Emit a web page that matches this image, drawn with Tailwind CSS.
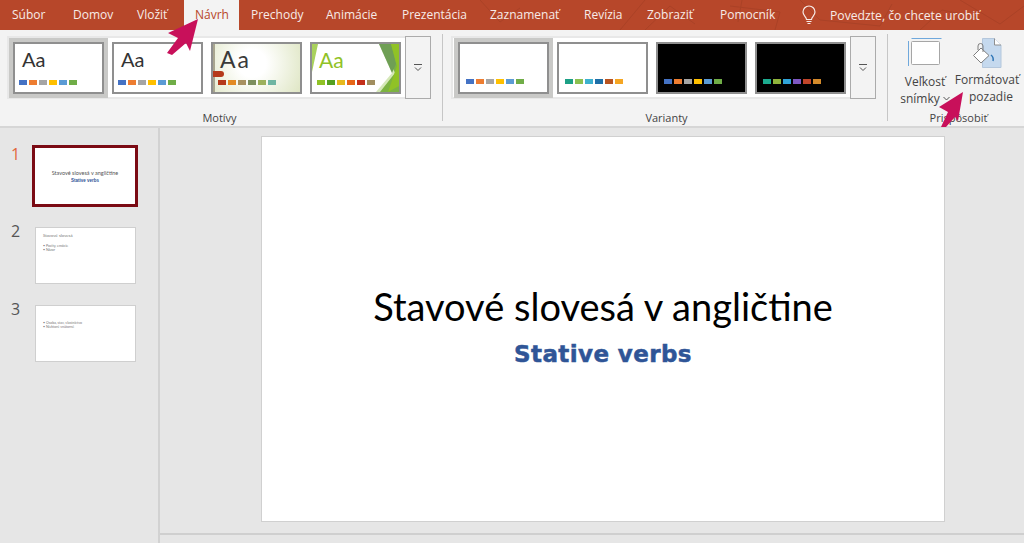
<!DOCTYPE html>
<html lang="sk">

<head>
    <meta charset="UTF-8">
    <title>Stavové slovesá v angličtine</title>
    <script src="https://cdn.jsdelivr.net/npm/@tailwindcss/browser@4"></script>
</head>

<body class="relative w-[1024px] h-[543px] overflow-hidden bg-[#e6e6e6] font-['Open_Sans',sans-serif]">

    <!-- tabs -->
    <div class="relative flex h-[30px] bg-[#b7472a] text-[12px] text-[#f7ebe7] leading-[29px]">
        <svg class="absolute left-[480px] top-0 w-[544px] h-[30px]" viewBox="0 0 544 30" fill="none" stroke="#aa4227" stroke-width="1">
            <path d="M-60 30L-20 2M-40 30L0 4M0 0L20 22L40 8" />
            <path d="M140 30L165 0M165 30L190 6L215 24" />
            <path d="M250 6L300 12L295 30M262 0L258 22" />
            <path d="M320 0L340 20L400 26L412 4" />
            <path d="M440 30L462 10L500 18M480 0L520 24L544 6" />
        </svg>
        <div class="relative w-[61px] pl-[12px]">Súbor</div>
        <div class="relative w-[64px] pl-[12px]">Domov</div>
        <div class="relative w-[59px] pl-[12px]">Vložiť</div>
        <div class="relative w-[55px] pl-[11px] bg-[#f3f3f3] text-[#b7472a]">Návrh</div>
        <div class="relative w-[75px] pl-[12px]">Prechody</div>
        <div class="relative w-[76px] pl-[12px]">Animácie</div>
        <div class="relative w-[88px] pl-[12px]">Prezentácia</div>
        <div class="relative w-[94px] pl-[12px]">Zaznamenať</div>
        <div class="relative w-[63px] pl-[12px]">Revízia</div>
        <div class="relative w-[73px] pl-[12px]">Zobraziť</div>
        <div class="relative w-[93px] pl-[12px]">Pomocník</div>
        <div class="relative flex items-center">
            <svg class="w-[16px] h-[20px] mb-[1px]" viewBox="0 0 16 20" fill="none" stroke="#f7ebe7" stroke-width="1.2">
                <path d="M5.5 14.5C5.2 11.8 2 10.5 2 7a6 6 0 0 1 12 0c0 3.500-3.200 4.800-3.500 7.500z" />
                <path d="M5.500 16.500h5M6.500 18.500h3" />
            </svg>
            <span class="ml-[13px] text-[12.2px]">Povedzte, čo chcete urobiť</span>
        </div>
    </div>

    <!-- ribbon -->
    <div class="flex h-[98px] bg-[#f3f3f3] border-b-2 border-[#d6d6d6] text-[#444444]">

        <section class="flex flex-col w-[443px] pl-[7px] mt-[4px] mb-[5px] border-r border-[#c6c6c6]">
            <div class="flex mt-[2px]">
                <div class="flex gap-[8px] w-[398px] h-[63px] pl-[4px] pt-[4px] bg-white border-y-2 border-l-2 border-[#e8e8e8]">
                    <div class="flex flex-col shrink-0 w-[91px] h-[52px] pl-[4px] bg-white border-2 border-[#8f8f8f] ring-4 ring-[#c9c9c7] text-[#333333]">
                        <div class="h-[30px] pl-[3px] text-[20px] font-['Lato',sans-serif] leading-[31px]">Aa</div>
                        <div class="flex gap-[2px] mt-[6px]">
                            <i class="w-[8px] h-[5px] bg-[#4472c4]"></i><i class="w-[8px] h-[5px] bg-[#ed7d31]"></i><i class="w-[8px] h-[5px] bg-[#a5a5a5]"></i><i class="w-[8px] h-[5px] bg-[#ffc000]"></i><i class="w-[8px] h-[5px] bg-[#5b9bd5]"></i><i class="w-[8px] h-[5px] bg-[#70ad47]"></i>
                        </div>
                    </div>
                    <div class="flex flex-col shrink-0 w-[91px] h-[52px] pl-[4px] bg-white border-2 border-[#8f8f8f] text-[#333333]">
                        <div class="h-[30px] pl-[3px] text-[20px] font-['Lato',sans-serif] leading-[31px]">Aa</div>
                        <div class="flex gap-[2px] mt-[6px]">
                            <i class="w-[8px] h-[5px] bg-[#4472c4]"></i><i class="w-[8px] h-[5px] bg-[#ed7d31]"></i><i class="w-[8px] h-[5px] bg-[#a5a5a5]"></i><i class="w-[8px] h-[5px] bg-[#ffc000]"></i><i class="w-[8px] h-[5px] bg-[#5b9bd5]"></i><i class="w-[8px] h-[5px] bg-[#70ad47]"></i>
                        </div>
                    </div>
                    <div class="relative flex flex-col shrink-0 w-[91px] h-[52px] pl-[5px] bg-[radial-gradient(circle_at_45%_40%,#ffffff_25%,#dfe6c4_100%)] border-2 border-[#8f8f8f] text-[#3a3a3a]">
                        <i class="absolute left-0 top-0 w-[2px] h-full bg-[#a8a58f]"></i>
                        <i class="absolute left-0 top-[27px] w-[11px] h-[6px] rounded-r-full bg-[#b5391a]"></i>
                        <div class="h-[30px] pl-[2px] text-[23px] tracking-[2px] font-['Lato',sans-serif] leading-[30px]">Aa</div>
                        <div class="flex gap-[2px] mt-[6px]">
                            <i class="w-[8px] h-[5px] bg-[#b5391a]"></i><i class="w-[8px] h-[5px] bg-[#e28a24]"></i><i class="w-[8px] h-[5px] bg-[#a89160]"></i><i class="w-[8px] h-[5px] bg-[#7d8f5e]"></i><i class="w-[8px] h-[5px] bg-[#9cb05c]"></i><i class="w-[8px] h-[5px] bg-[#6fb5a2]"></i>
                        </div>
                    </div>
                    <div class="relative flex flex-col shrink-0 w-[91px] h-[52px] pl-[5px] bg-white border-2 border-[#8f8f8f] text-[#90c226] overflow-hidden">
                        <svg class="absolute left-0 top-0 w-[87px] h-[48px]" viewBox="0 0 87 48">
                            <path d="M0 0H6L0 28z" fill="#a9d15c" />
                            <path d="M67 0H87V48H64L80 29z" fill="#d5e8b8" />
                            <path d="M70 0H87V48H68L83 29z" fill="#7cb342" />
                            <path d="M67 0H79L84 20L80 29z" fill="#6f9f55" />
                            <path d="M79 0H87V42L76 48L85 22z" fill="#90c226" />
                        </svg>
                        <div class="relative h-[30px] pl-[2px] text-[21px] font-['Lato',sans-serif] leading-[31px]">Aa</div>
                        <div class="relative flex gap-[2px] mt-[6px]">
                            <i class="w-[8px] h-[5px] bg-[#90c226]"></i><i class="w-[8px] h-[5px] bg-[#54a021]"></i><i class="w-[8px] h-[5px] bg-[#e6b91e]"></i><i class="w-[8px] h-[5px] bg-[#e76618]"></i><i class="w-[8px] h-[5px] bg-[#c42f1a]"></i><i class="w-[8px] h-[5px] bg-[#a18e5f]"></i>
                        </div>
                    </div>
                </div>
                <div class="flex flex-col items-center justify-center w-[26px] h-[63px] border border-[#ababab]">
                    <i class="w-[8px] h-px bg-[#555555]"></i>
                    <svg class="w-[8px] h-[5px] mt-[2px]" viewBox="0 0 8 5" fill="none" stroke="#555555"><path d="M1 .5L4 3.500L7 .5" /></svg>
                </div>
            </div>
            <div class="mt-auto -mb-[5px] pr-[10px] text-center text-[11px] leading-[16px]">Motívy</div>
        </section>

        <section class="flex flex-col w-[445px] pl-[8px] mt-[4px] mb-[5px] border-r border-[#c6c6c6]">
            <div class="flex mt-[2px]">
                <div class="flex gap-[8px] w-[399px] h-[63px] pl-[5px] pt-[4px] bg-white border-y-2 border-l-2 border-[#e8e8e8]">
                    <div class="flex shrink-0 gap-[2px] items-end w-[91px] h-[52px] pl-[6px] pb-[8px] bg-white border-2 border-[#8f8f8f] ring-4 ring-[#c9c9c7]">
                        <i class="w-[8px] h-[5px] bg-[#4472c4]"></i><i class="w-[8px] h-[5px] bg-[#ed7d31]"></i><i class="w-[8px] h-[5px] bg-[#a5a5a5]"></i><i class="w-[8px] h-[5px] bg-[#ffc000]"></i><i class="w-[8px] h-[5px] bg-[#5b9bd5]"></i><i class="w-[8px] h-[5px] bg-[#70ad47]"></i>
                    </div>
                    <div class="flex shrink-0 gap-[2px] items-end w-[91px] h-[52px] pl-[6px] pb-[8px] bg-white border-2 border-[#8f8f8f]">
                        <i class="w-[8px] h-[5px] bg-[#1ca085]"></i><i class="w-[8px] h-[5px] bg-[#8cc04f]"></i><i class="w-[8px] h-[5px] bg-[#3cb1cf]"></i><i class="w-[8px] h-[5px] bg-[#1e6fa8]"></i><i class="w-[8px] h-[5px] bg-[#b9541f]"></i><i class="w-[8px] h-[5px] bg-[#f5a623]"></i>
                    </div>
                    <div class="flex shrink-0 gap-[2px] items-end w-[91px] h-[52px] pl-[6px] pb-[8px] bg-black border-2 border-[#8f8f8f]">
                        <i class="w-[8px] h-[5px] bg-[#4472c4]"></i><i class="w-[8px] h-[5px] bg-[#ed7d31]"></i><i class="w-[8px] h-[5px] bg-[#a5a5a5]"></i><i class="w-[8px] h-[5px] bg-[#ffc000]"></i><i class="w-[8px] h-[5px] bg-[#5b9bd5]"></i><i class="w-[8px] h-[5px] bg-[#70ad47]"></i>
                    </div>
                    <div class="flex shrink-0 gap-[2px] items-end w-[91px] h-[52px] pl-[6px] pb-[8px] bg-black border-2 border-[#8f8f8f]">
                        <i class="w-[8px] h-[5px] bg-[#1cab8f]"></i><i class="w-[8px] h-[5px] bg-[#8eb33b]"></i><i class="w-[8px] h-[5px] bg-[#2fa3d8]"></i><i class="w-[8px] h-[5px] bg-[#7e57c2]"></i><i class="w-[8px] h-[5px] bg-[#c0452a]"></i><i class="w-[8px] h-[5px] bg-[#d48a2a]"></i>
                    </div>
                </div>
                <div class="flex flex-col items-center justify-center w-[26px] h-[63px] border border-[#ababab]">
                    <i class="w-[8px] h-px bg-[#555555]"></i>
                    <svg class="w-[8px] h-[5px] mt-[2px]" viewBox="0 0 8 5" fill="none" stroke="#555555"><path d="M1 .5L4 3.500L7 .5" /></svg>
                </div>
            </div>
            <div class="mt-auto -mb-[5px] pr-[5px] text-center text-[11px] leading-[16px]">Varianty</div>
        </section>

        <section class="flex flex-col flex-1 pt-[2px]">
            <div class="flex text-[12px] leading-[17px] text-center">
                <div class="flex flex-col items-center w-[74px]">
                    <svg class="w-[34px] h-[29px] mt-[6px]" viewBox="0 0 34 29" fill="none">
                        <path d="M3.500 .5H33.500M.5 3V28" stroke="#6fa8dc" />
                        <rect x="3.500" y="3.500" width="28" height="23" rx="1" fill="#ffffff" stroke="#a6a6a6" />
                    </svg>
                    <div class="mt-[6px]">Veľkosť</div>
                    <div class="flex items-center gap-[3px] whitespace-nowrap">snímky
                        <svg class="w-[7px] h-[5px]" viewBox="0 0 7 5" fill="none" stroke="#555555"><path d="M.5 1L3.500 4L6.500 1" /></svg>
                    </div>
                </div>
                <div class="flex flex-col items-center w-[50px]">
                    <svg class="shrink-0 w-[30px] h-[32px] mt-[5px]" viewBox="0 0 30 32" fill="none">
                        <path d="M10.500 1.500H22.500L29 8V30.500H10.500z" fill="#c5d9ee" stroke="#b4c7dc" />
                        <path d="M22.500 1.500V8H29" fill="#ffffff" stroke="#8f8f8f" />
                        <path d="M9 11L17 18.500L9 26L1.500 18.500z" fill="#ffffff" stroke="#7f7f7f" />
                        <path d="M6 13V9a2.500 2.500 0 0 1 5 0v6" stroke="#7f7f7f" />
                        <path d="M19 18c2.500 2 2.500 4 2 6" stroke="#2e75b6" stroke-width="1.500" />
                    </svg>
                    <div class="mt-[2px] whitespace-nowrap">Formátovať</div>
                    <div class="pl-[8px]">pozadie</div>
                </div>
            </div>
            <div class="mt-auto pl-[5px] text-center text-[11px] leading-[16px]">Prispôsobiť</div>
        </section>
    </div>

    <!-- slides + canvas -->
    <div class="flex h-[415px]">
        <aside class="w-[160px] shrink-0 border-r-2 border-[#d2d2d2] pt-[17px] text-[#555555] text-[16px]">
            <div class="flex h-[62px] mb-[20px] pl-[11px]">
                <span class="w-[21px] leading-[18px] text-[#e2683f]">1</span>
                <div class="flex flex-col items-center w-[106px] h-[62px] pt-[21px] bg-white border-[3px] border-[#7b0b14]">
                    <p class="text-[5.500px] leading-[8px] text-[#555555] font-['Lato',sans-serif] whitespace-nowrap">Stavové slovesá v angličtine</p>
                    <p class="text-[4.500px] leading-[7px] font-bold text-[#2f5597] font-['Liberation_Sans',sans-serif]">Stative verbs</p>
                </div>
            </div>
            <div class="flex h-[57px] mb-[21px] pl-[11px]">
                <span class="w-[24px] leading-[8px]">2</span>
                <div class="w-[101px] h-[57px] pl-[7px] pt-[4px] bg-white border border-[#cfcfcf] text-[#777777] font-['Lato',sans-serif]">
                    <p class="text-[4.300px] leading-[8px]">Stavové slovesá</p>
                    <p class="mt-[4px] text-[3.500px] leading-[4px]">• Pocity, emócie</p>
                    <p class="text-[3.500px] leading-[4px]">• Názor</p>
                </div>
            </div>
            <div class="flex h-[57px] pl-[11px]">
                <span class="w-[24px] leading-[8px]">3</span>
                <div class="w-[101px] h-[57px] pl-[7px] pt-[15px] bg-white border border-[#cfcfcf] text-[#777777] font-['Lato',sans-serif]">
                    <p class="text-[3.500px] leading-[4px]">• Osoba, stav, vlastníctvo</p>
                    <p class="text-[3.500px] leading-[4px]">• Niektoré vnútorné</p>
                </div>
            </div>
        </aside>
        <main class="flex-1 pl-[101px] pt-[8px]">
            <div class="flex flex-col items-center w-[684px] h-[386px] pt-[146px] bg-white border border-[#d0d0d0]">
                <h1 class="text-[38px] leading-[46px] text-black font-['Lato',sans-serif] whitespace-nowrap">Stavové slovesá v angličtine</h1>
                <p class="mt-[9px] text-[23px] leading-[32px] tracking-[0.4px] font-bold text-[#2f5597] font-['DejaVu_Sans',sans-serif] [-webkit-text-stroke:0.5px_#2f5597]">Stative verbs</p>
            </div>
            <div class="h-[2px] mt-[11px] -ml-[101px] bg-[#cfcfcf]"></div>
        </main>
    </div>

    <!-- pink arrows drawn over the screenshot -->
    <svg class="absolute left-0 top-0 w-[1024px] h-[543px] pointer-events-none" viewBox="0 0 1024 543">
        <path d="M198 19L168 33L178 38L167 53L172 55L186 43L190 51z" fill="#c8105a" />
        <path d="M963 92L939 107L948 112L941 127L946 127L955 117L958 121z" fill="#c8105a" />
    </svg>

</body>

</html>
